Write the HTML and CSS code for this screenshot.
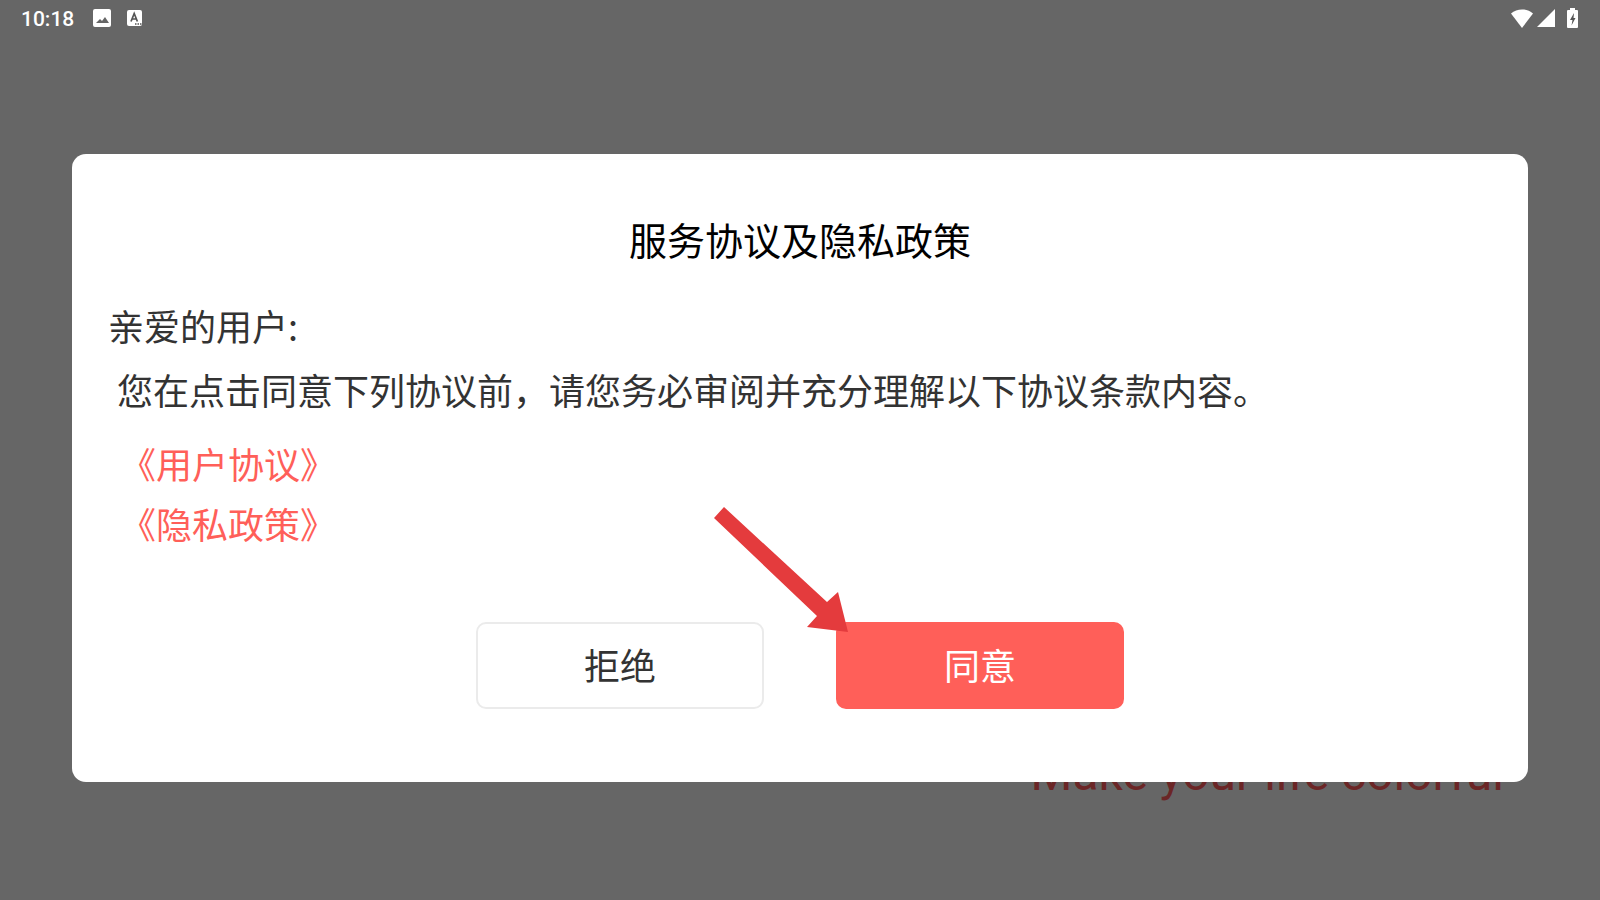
FILE: index.html
```html
<!DOCTYPE html>
<html lang="zh-CN">

<head>
  <meta charset="utf-8">
  <title>服务协议及隐私政策</title>
  <link rel="stylesheet" href="styles.css">
</head>

<body class="main">
  <header class="status">
    <span class="time">10:18</span>
    <svg class="pic" width="18" height="18" viewBox="0 0 18 18">
      <path fill="#fff" fill-rule="evenodd" d="M2 0h14a2 2 0 0 1 2 2v14a2 2 0 0 1-2 2H2a2 2 0 0 1-2-2V2a2 2 0 0 1 2-2zM3 14h13l-4-6-3 4-2-2z" />
    </svg>
    <svg width="16" height="16" viewBox="0 0 16 16">
      <rect width="15" height="16" rx="2" fill="#fff" />
      <path d="M4 11.500L7.200 3.500L10.400 11.500M5.200 9h4" fill="none" stroke="#555" stroke-width="1.700" />
      <path d="M8 14h1.500M10.500 14h1.500M13 14h1.500" stroke="#555" stroke-width="1.500" />
    </svg>
    <div class="signals">
      <svg width="22" height="19" viewBox="0 0 22 19">
        <path d="M0 4.500C6-1 16-1 22 4.500L11 19z" fill="#fff" />
      </svg>
      <svg class="cell" width="18" height="18" viewBox="0 0 18 18">
        <path d="M18 0v18H0z" fill="#fff" />
      </svg>
      <svg width="11" height="20" viewBox="0 0 11 20">
        <path d="M3 0h5v2h2a1 1 0 0 1 1 1v16a1 1 0 0 1-1 1H1a1 1 0 0 1-1-1V3a1 1 0 0 1 1-1h2z" fill="#fff" />
        <path d="M7 5L3 12h2.500l-1 5.500L8.500 10H6.500z" fill="#555" />
      </svg>
    </div>
  </header>

  <p class="slogan">Make your life colorful</p>

  <main class="page">
    <section class="dialog" role="dialog" aria-labelledby="title">
      <h1 id="title">服务协议及隐私政策</h1>
      <p class="text">亲爱的用户:</p>
      <p class="text indent">您在点击同意下列协议前，请您务必审阅并充分理解以下协议条款内容。</p>
      <div class="links">
        <a href="#">《用户协议》</a>
        <a href="#">《隐私政策》</a>
      </div>
      <div class="buttons">
        <button class="btn" type="button">拒绝</button>
        <div class="agree">
          <button class="btn ok" type="button">同意</button>
          <svg class="arrow" width="134" height="125" viewBox="0 0 134 125">
            <path d="M10 0L113 95L124 85L134 125L93 120L103 109L0 11z" fill="#e43b3d" />
          </svg>
        </div>
      </div>
    </section>
  </main>
</body>

</html>
```
FILE: styles.css
```css
.main {
  display: flex;
  flex-direction: column;
  min-height: 100vh;
  margin: 0;
  background: #666;
  font-family: "Noto Sans CJK SC", sans-serif;
}

.status {
  display: flex;
  align-items: center;
  height: 36px;
  padding: 0 22px 0 21px;
  color: #fff;
}

.time {
  font: 500 21px/34px Roboto, sans-serif;
  padding-top: 2px;
}

.pic {
  margin: 0 16px 0 19px;
}

.signals {
  display: flex;
  align-items: center;
  margin-left: auto;
}

.cell {
  margin: 0 12px 0 4px;
}

/* sits behind the dialog */
.slogan {
  position: absolute;
  right: 96px;
  bottom: 98px;
  margin: 0;
  color: #6b2626;
  font: 48px/56px Roboto, sans-serif;
}

.page {
  position: relative;
  display: flex;
  flex: 1;
  align-items: center;
  padding: 0 72px;
}

.dialog {
  flex: 1;
  padding: 58px 36px 73px;
  border-radius: 14px;
  background: #fff;
}

.dialog h1 {
  margin: 0 0 27px;
  color: #000;
  font-size: 38px;
  font-weight: 400;
  line-height: 54px;
  text-align: center;
}

.text {
  margin: 0;
  color: #333;
  font-size: 36px;
  line-height: 64px;
}

.indent {
  padding-left: 9px;
}

.links {
  display: flex;
  flex-direction: column;
  align-items: flex-start;
  padding: 12px 12px 69px;
}

.links a {
  color: #ff5f59;
  font-size: 36px;
  line-height: 60px;
  text-decoration: none;
}

.buttons {
  display: flex;
  justify-content: center;
  gap: 72px;
}

.btn {
  display: block;
  width: 288px;
  height: 87px;
  padding: 0 0 4px;
  border: 2px solid #ebebeb;
  border-radius: 10px;
  background: #fff;
  color: #333;
  font-family: inherit;
  font-size: 36px;
}

.ok {
  border-color: #ff5f59;
  background: #ff5f59;
  color: #fff;
}

.agree {
  position: relative;
}

.arrow {
  position: absolute;
  top: -115px;
  left: -122px;
  pointer-events: none;
}
```
